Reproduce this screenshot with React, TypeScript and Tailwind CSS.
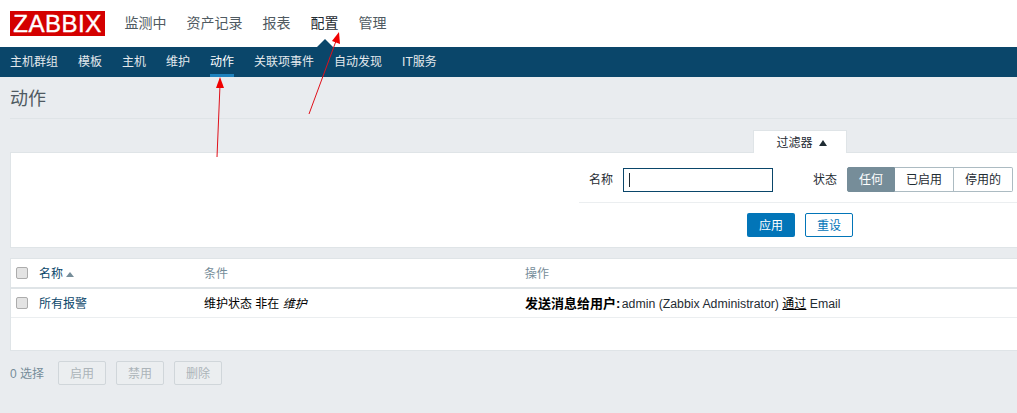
const mainNav = ['监测中', '资产记录', '报表', '配置', '管理'];
const subNav = ['主机群组', '模板', '主机', '维护', '动作', '关联项事件', '自动发现', 'IT服务'];
const fontStack = "font-['Liberation_Sans','Noto_Sans_CJK_SC',sans-serif]";

function Checkbox() {
  return <div className="w-[12px] h-[12px] rounded-[2px] border border-[#acacac] bg-[#e3e3e3]" />;
}

function DisabledButton({ label }: { label: string }) {
  return (
    <div className="w-[48px] h-[24px] pt-[1px] flex items-center justify-center rounded-[2px] border border-[#d0d6da] bg-[#ebeef0] text-[#acb4b9]">
      {label}
    </div>
  );
}

export default function App() {
  return (
    <div className={`relative h-[413px] w-[1017px] overflow-hidden bg-[#e9ecef] text-[12px] text-[#1f2c33] ${fontStack}`}>
      {/* Header */}
      <div className="h-[47px] bg-white flex items-center pl-[10px]">
        <div className="w-[95px] h-[25px] bg-[#d40000] text-white text-[24px] leading-[25px] text-center tracking-[0.5px] [-webkit-text-stroke:0.4px_white]">
          ZABBIX
        </div>
        <div className="ml-[19.5px] flex gap-[20px] text-[14px]">
          {mainNav.map((item) => (
            <span key={item} className={item === '配置' ? 'text-[#1f2c33]' : 'text-[#4f5a61]'}>
              {item}
            </span>
          ))}
        </div>
      </div>

      {/* Sub nav */}
      <div className="relative h-[30px] bg-[#0a466a] flex gap-[20px] pl-[10px] text-[#e3e9ed]">
        {subNav.map((item) => (
          <div
            key={item}
            className={`h-[30px] leading-[31px] ${item === '动作' ? 'text-white border-b-[3px] border-[#1f82bd]' : ''}`}
          >
            {item}
          </div>
        ))}
        <div className="absolute left-[317px] top-[-8px] w-0 h-0 border-x-[8px] border-x-transparent border-b-[8px] border-b-[#0a466a]" />
      </div>

      {/* Title */}
      <div className="ml-[10px] h-[42px] border-b border-[#dfe4e7] flex items-center text-[18px] text-[#4f5a61] pt-[3px]">
        动作
      </div>

      {/* Filter */}
      <div className="mt-[11px] ml-[10px]">
        <div className="flex justify-end pr-[170px]">
          <div className="relative z-10 w-[94px] h-[23px] -mb-[1px] pt-[1px] pl-[3px] bg-white border border-b-0 border-[#dfe4e7] flex items-center justify-center gap-[6px]">
            <span>过滤器</span>
            <span className="w-0 h-0 border-x-[4px] border-x-transparent border-b-[6px] border-b-[#1f2c33]" />
          </div>
        </div>
        <div className="h-[96px] bg-white border-y border-l border-[#dfe4e7] flex justify-end">
          <div className="w-[438px]">
            <div className="h-[50px] border-b border-[#ebeef0] flex items-center pl-[10px] pt-[4px]">
              <span className="w-[24px]">名称</span>
              <div className="ml-[10px] w-[150px] h-[24px] border border-[#0a466a] flex items-center pl-[5px]">
                <div className="w-[1px] h-[14px] bg-[#1f2c33]" />
              </div>
              <span className="ml-[40px] w-[24px]">状态</span>
              <div className="ml-[10px] flex h-[25px] text-center leading-[24px]">
                <div className="w-[48px] bg-[#768d99] border border-[#768d99] rounded-l-[2px] text-white">任何</div>
                <div className="w-[59px] border-y border-r border-[#acbbc2]">已启用</div>
                <div className="w-[59px] border-y border-r border-[#acbbc2] rounded-r-[2px]">停用的</div>
              </div>
            </div>
            <div className="flex gap-[10px] pt-[10px] pl-[168px]">
              <div className="w-[48px] h-[24px] pt-[1px] flex items-center justify-center rounded-[2px] bg-[#0275b8] text-white">
                应用
              </div>
              <div className="w-[48px] h-[24px] pt-[1px] flex items-center justify-center rounded-[2px] border border-[#0275b8] text-[#0275b8]">
                重设
              </div>
            </div>
          </div>
        </div>
      </div>

      {/* Table */}
      <div className="mt-[10px] ml-[10px] h-[93px] bg-white border-y border-l border-[#dfe4e7]">
        <div className="h-[28px] border-b-2 border-[#dfe4e7] box-content -mb-[1px] flex items-center text-[#768d99]">
          <div className="w-[28px] pl-[5px]">
            <Checkbox />
          </div>
          <div className="w-[165px] pt-[2px] flex items-center gap-[3px] text-[#0a466a]">
            名称
            <span className="w-0 h-0 border-x-[4px] border-x-transparent border-b-[5px] border-b-[#768d99]" />
          </div>
          <div className="w-[321px] pt-[2px]">条件</div>
          <div className="pt-[2px]">操作</div>
        </div>
        <div className="h-[30px] border-b border-[#ebeef0] flex items-center">
          <div className="w-[28px] pl-[5px]">
            <Checkbox />
          </div>
          <div className="w-[165px] pt-[2px] text-[#0a466a]">所有报警</div>
          <div className="w-[321px] pt-[2px] text-black">
            维护状态 非在 <i>维护</i>
          </div>
          <div className="pt-[2px] text-[12.3px]">
            <b className="mr-[-2px] text-[13px] text-black">发送消息给用户:</b> admin (Zabbix Administrator) <u className="text-black text-[12px]">通过</u> Email
          </div>
        </div>
      </div>

      {/* Footer actions */}
      <div className="mt-[10px] ml-[10px] flex items-center gap-[10px] text-[#768d99]">
        <span className="w-[38px] pt-[1px]">0 选择</span>
        <DisabledButton label="启用" />
        <DisabledButton label="禁用" />
        <DisabledButton label="删除" />
      </div>

      {/* Red annotation arrows */}
      <svg className="absolute left-0 top-0 pointer-events-none" width="1017" height="413">
        <line x1="217" y1="157" x2="220" y2="85" stroke="#e0101a" strokeWidth="1" />
        <polygon points="220,77 224,88 216,88" fill="#f00000" />
        <line x1="309" y1="114" x2="336" y2="41" stroke="#e0101a" strokeWidth="1" />
        <polygon points="339,32 340,44 332,41" fill="#f00000" />
      </svg>
    </div>
  );
}
